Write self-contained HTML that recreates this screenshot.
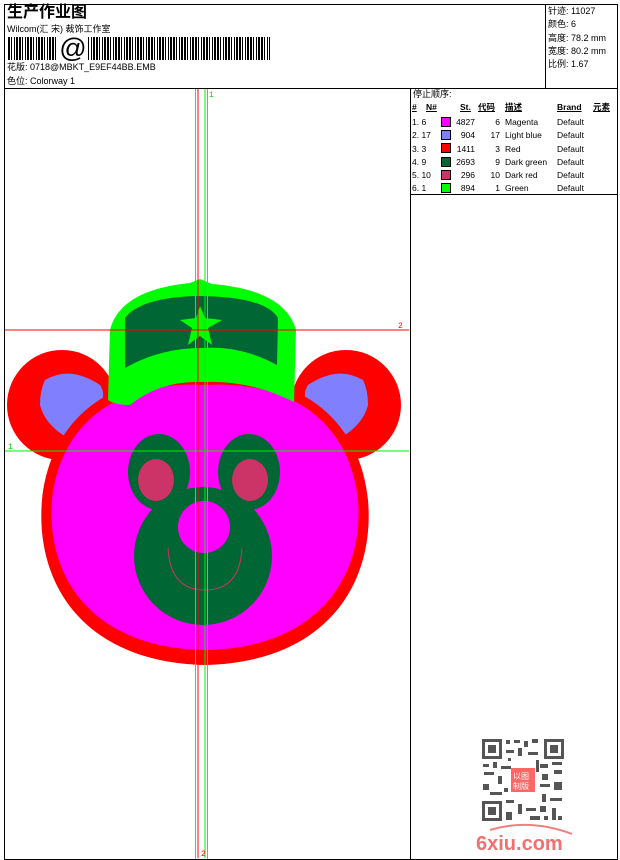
<!DOCTYPE html>
<html><head><meta charset="utf-8"><style>
*{margin:0;padding:0;box-sizing:border-box}
body{width:620px;height:860px;background:#fff;position:relative;overflow:hidden;font-family:"Liberation Sans","WenQuanYi Zen Hei","Noto Sans CJK SC",sans-serif;color:#000}
.a{position:absolute;white-space:nowrap}
.s{font-size:9px;line-height:11px}
.b{position:absolute;background:#000}
.tb{position:absolute;font-size:8.5px;line-height:11px}
.sw{position:absolute;width:10px;height:10px;border:1px solid #000}
</style></head><body>
<!-- borders -->
<div class="b" style="left:4px;top:4px;width:614px;height:1px"></div>
<div class="b" style="left:4px;top:4px;width:1px;height:856px"></div>
<div class="b" style="left:617px;top:4px;width:1px;height:856px"></div>
<div class="b" style="left:4px;top:859px;width:614px;height:1px"></div>
<div class="b" style="left:4px;top:88px;width:614px;height:1px"></div>
<div class="b" style="left:545px;top:4px;width:1px;height:84px"></div>
<div class="b" style="left:410px;top:88px;width:1px;height:771px"></div>
<div class="b" style="left:410px;top:194px;width:208px;height:1px"></div>

<div class="a" style="left:7px;top:3px;font-size:16px;font-weight:bold;line-height:20px">生产作业图</div>
<div class="a s" style="left:7px;top:24px">Wilcom(汇 宋) 裁饰工作室</div>
<div class="a" style="left:8px;top:37px;width:262px;height:23px;background:repeating-linear-gradient(90deg,#000 0 2px,#fff 2px 3px,#000 3px 4px,#fff 4px 6px,#000 6px 7px,#fff 7px 8px,#000 8px 10px,#fff 10px 11px)"></div>
<div class="a" style="left:58px;top:34px;width:30px;height:28px;background:#fff;font-size:27px;line-height:28px;text-align:center">@</div>
<div class="a s" style="left:7px;top:62px">花版: 0718@MBKT_E9EF44BB.EMB</div>
<div class="a s" style="left:7px;top:76px">色位: Colorway 1</div>

<div class="a s" style="left:548px;top:5px;line-height:13.3px">针迹: 11027<br>颜色: 6<br>高度: 78.2 mm<br>宽度: 80.2 mm<br>比例: 1.67</div>

<div class="a s" style="left:413px;top:89px">停止顺序:</div>
<div class="tb" style="left:412px;top:102px;font-weight:bold;text-decoration:underline">#</div>
<div class="tb" style="left:426px;top:102px;font-weight:bold;text-decoration:underline">N#</div>
<div class="tb" style="left:460px;top:102px;font-weight:bold;text-decoration:underline">St.</div>
<div class="tb" style="left:478px;top:102px;font-weight:bold;text-decoration:underline">代码</div>
<div class="tb" style="left:505px;top:102px;font-weight:bold;text-decoration:underline">描述</div>
<div class="tb" style="left:557px;top:102px;font-weight:bold;text-decoration:underline">Brand</div>
<div class="tb" style="left:593px;top:102px;font-weight:bold;text-decoration:underline">元素</div>

<div class="tb" style="left:412px;top:116px;line-height:13.3px">1. 6<br>2. 17<br>3. 3<br>4. 9<br>5. 10<br>6. 1</div>
<div class="sw" style="left:441px;top:117px;background:#ff00ff"></div>
<div class="sw" style="left:441px;top:130px;background:#8080ff"></div>
<div class="sw" style="left:441px;top:143px;background:#ff0000"></div>
<div class="sw" style="left:441px;top:157px;background:#006633"></div>
<div class="sw" style="left:441px;top:170px;background:#cc3366"></div>
<div class="sw" style="left:441px;top:183px;background:#00ff00"></div>
<div class="tb" style="left:450px;width:25px;text-align:right;top:116px;line-height:13.3px">4827<br>904<br>1411<br>2693<br>296<br>894</div>
<div class="tb" style="left:480px;width:20px;text-align:right;top:116px;line-height:13.3px">6<br>17<br>3<br>9<br>10<br>1</div>
<div class="tb" style="left:505px;top:116px;line-height:13.3px">Magenta<br>Light blue<br>Red<br>Dark green<br>Dark red<br>Green</div>
<div class="tb" style="left:557px;top:116px;line-height:13.3px">Default<br>Default<br>Default<br>Default<br>Default<br>Default</div>

<svg class="a" style="left:0;top:0" width="620" height="860" viewBox="0 0 620 860">
<!-- ears -->
<circle cx="62" cy="405" r="55" fill="#ff0000"/>
<circle cx="346" cy="405" r="55" fill="#ff0000"/>
<path d="M45 380 Q70 365 100 385 Q110 400 88 420 Q75 435 68 438 Q45 425 40 405 Q40 390 45 380Z" fill="#8080ff"/>
<path d="M363 380 Q338 365 308 385 Q298 400 320 420 Q333 435 340 438 Q363 425 368 405 Q368 390 363 380Z" fill="#8080ff"/>
<!-- face -->
<path d="M205 378 C300 370 360 420 368 500 C375 580 330 662 205 665 C80 662 35 580 42 500 C50 420 110 370 205 378Z" fill="#ff0000"/>
<path d="M205 385 C295 380 350 425 358 500 C364 575 320 648 205 650 C90 648 46 575 52 500 C60 425 115 380 205 385Z" fill="#ff00ff"/>
<!-- hat -->
<path d="M108 400 L110 330 Q120 290 190 283 L200 279 L212 284 Q285 290 296 330 L294 402 Q250 380 205 382 Q160 380 130 405 Q115 405 108 400Z" fill="#00ff00"/>
<path d="M125 368 L125 318 Q140 298 195 296 Q265 296 278 318 L277 365 Q240 345 202 348 Q160 348 125 368Z" fill="#006633"/>
<path d="M200 306 L205 318 L222 320 L208 328 L212 345 L200 336 L188 345 L192 328 L180 320 L196 318Z" fill="#00ff00"/>
<!-- eyes -->
<ellipse cx="159" cy="472" rx="31" ry="38" fill="#006633"/>
<ellipse cx="249" cy="472" rx="31" ry="38" fill="#006633"/>
<ellipse cx="156" cy="480" rx="18" ry="21" fill="#cc3366"/>
<ellipse cx="250" cy="480" rx="18" ry="21" fill="#cc3366"/>
<!-- muzzle -->
<circle cx="203" cy="556" r="69" fill="#006633"/>
<circle cx="204" cy="527" r="26" fill="#ff00ff"/>
<path d="M168 548 Q170 590 205 590 Q240 590 242 548" fill="none" stroke="#cc3366" stroke-width="1"/>
<!-- guide lines -->
<line x1="195.5" y1="89" x2="195.5" y2="859" stroke="#999" stroke-width="1"/>
<line x1="207.5" y1="89" x2="207.5" y2="859" stroke="#999" stroke-width="1"/>
<line x1="198" y1="89" x2="198" y2="858" stroke="#ff0000" stroke-width="1"/>
<line x1="205" y1="89" x2="205" y2="858" stroke="#00ee00" stroke-width="1"/>
<line x1="5" y1="330" x2="409" y2="330" stroke="#ff0000" stroke-width="1"/>
<line x1="5" y1="451" x2="409" y2="451" stroke="#00ee00" stroke-width="1"/>
<text x="209" y="97" font-size="8" fill="#00cc00" font-family="Liberation Mono">1</text>
<text x="8" y="449" font-size="8" fill="#00cc00" font-family="Liberation Mono">1</text>
<text x="398" y="328" font-size="8" fill="#ff0000" font-family="Liberation Mono">2</text>
<text x="201" y="856" font-size="8" fill="#ff0000" font-family="Liberation Mono">2</text>
<!-- QR -->
<g fill="#555">
<rect x="481" y="738" width="84" height="84" fill="#fff"/>
<rect x="482" y="739" width="20" height="20"/><rect x="485" y="742" width="14" height="14" fill="#fff"/><rect x="488" y="745" width="8" height="8"/>
<rect x="544" y="739" width="20" height="20"/><rect x="547" y="742" width="14" height="14" fill="#fff"/><rect x="550" y="745" width="8" height="8"/>
<rect x="482" y="801" width="20" height="20"/><rect x="485" y="804" width="14" height="14" fill="#fff"/><rect x="488" y="807" width="8" height="8"/>
<path d="M506 740h4v4h-4zM514 740h6v3h-6zM524 741h4v6h-4zM532 739h6v4h-6zM506 750h8v3h-8zM518 748h4v8h-4zM528 752h10v3h-10zM483 764h6v3h-6zM493 762h4v6h-4zM501 766h10v3h-10zM540 764h8v4h-8zM552 762h10v3h-10zM484 772h10v3h-10zM498 776h4v8h-4zM542 774h6v6h-6zM554 770h8v4h-8zM483 784h6v6h-6zM490 792h12v3h-12zM540 784h10v3h-10zM554 782h8v8h-8zM542 794h4v8h-4zM550 798h12v3h-12zM506 800h8v3h-8zM518 804h4v10h-4zM526 808h10v3h-10zM540 806h6v6h-6zM552 808h4v12h-4zM506 812h6v8h-6zM530 816h10v4h-10zM544 816h4v4h-4zM558 816h4v4h-4zM504 788h4v4h-4zM536 760h3v12h-3zM508 758h3v3h-3z"/>
</g>
<rect x="511" y="768" width="24" height="24" fill="#ff6666"/>
<text x="513" y="779" font-size="8" fill="#fff" font-family="WenQuanYi Zen Hei">以图</text>
<text x="513" y="789" font-size="8" fill="#fff" font-family="WenQuanYi Zen Hei">制版</text>
<path d="M490 830 Q530 818 572 834" fill="none" stroke="#f08080" stroke-width="2"/>
<text x="476" y="850" font-size="20" font-weight="bold" fill="#f07070" font-family="Liberation Sans">6xiu.com</text>
</svg>
</body></html>
